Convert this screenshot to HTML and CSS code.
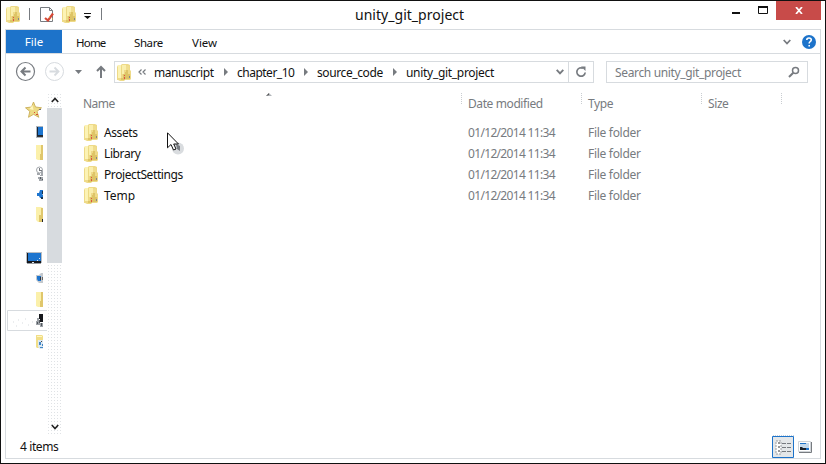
FILE: index.html
```html
<!DOCTYPE html>
<html lang="en">
<head>
<meta charset="utf-8">
<title>unity_git_project</title>
<link rel="stylesheet" href="styles.css">
</head>
<body>
<svg class="defs" width="0" height="0">
  <symbol id="folder" viewBox="0 0 14 17">
    <path d="M1 1h3l1-1h6l2 1v5l1 1v8l-1 1H8l-1 1H3l-2-1H0V3z" fill="#eeda88"/>
    <path d="M1 1h3v13H1z" fill="#fcf3b5"/>
    <path d="M5 1h4v5H7v4H5z" fill="#faefad"/>
    <path d="M9 2h3v4H9z" fill="#f0dd8e"/>
    <path d="M9 6h2v4h2v5H8v1H4v-2h2v-4h2V8h1z" fill="#dec466"/>
    <path d="M4 3h1v8H4z" fill="#ecd983"/>
    <path d="M7 11h1v1H7zM7 13h1v2H7z" fill="#df5146"/>
    <path d="M12 12h1v2h-1z" fill="#85878c"/>
  </symbol>
  <symbol id="crumb" viewBox="0 0 4 8"><path d="M0 0l4 4-4 4z" fill="#777b80"/></symbol>
  <symbol id="monitor" viewBox="0 0 16 13">
    <path d="M0 0h16v11H0z" fill="#b9bdc2"/><path d="M1 1h14v10H1z" fill="#15181d"/>
    <path d="M2 1h13v8H2z" fill="#1d75cf"/><path d="M1 11h14v1H1z" fill="#999da2"/>
    <path d="M11 8h1v1h-1zM13 6h1v1h-1zM6 10h2v1H6z" fill="#dce4ec"/>
  </symbol>
</svg>
<div class="window">
  <header class="titlebar">
    <div class="quick">
      <svg class="q-folder" width="14" height="17"><use href="#folder"/></svg>
      <i class="sep"></i>
      <svg class="q-doc" width="16" height="17" viewBox="0 0 16 17"><path d="M.5 1.500h9l3 3v11H.5z" fill="#fff" stroke="#777b80"/><path d="M9.500 1.500v3h3" fill="none" stroke="#777b80"/><path d="M5 12l3 2.500 5-7" fill="none" stroke="#d54836" stroke-width="2.200"/><path d="M9 11h1M12 13h1" stroke="#edb24a"/></svg>
      <svg class="q-folder2" width="14" height="17"><use href="#folder"/></svg>
      <svg class="q-menu" width="7" height="6" viewBox="0 0 7 6"><path d="M0 0h7v1H0zM0 3h7L3.500 6z" fill="#111"/></svg>
      <i class="sep"></i>
    </div>
    <h1 class="title">unity_git_project</h1>
    <div class="controls">
      <svg width="53" height="18" viewBox="0 0 53 18"><path d="M9 11h8v2H9z" fill="#111"/><path d="M35.500 6v6.500h9V6z" fill="none" stroke="#111"/><path d="M35 5h10v2H35z" fill="#111"/></svg>
      <span class="close"><svg width="8" height="7" viewBox="0 0 8 7"><path d="M1 0l6 7M7 0L1 7" stroke="#fff" stroke-width="1.700"/></svg></span>
    </div>
  </header>
  <div class="frame">
    <nav class="tabs">
      <span class="file">File</span><span class="tab home">Home</span><span class="tab share">Share</span><span class="tab view">View</span>
      <svg class="collapse" width="8" height="6" viewBox="0 0 8 6"><path d="M.7 1L4 4.500 7.300 1" fill="none" stroke="#777b80" stroke-width="1.800"/></svg>
      <svg class="help" width="14" height="14" viewBox="0 0 14 14"><circle cx="7" cy="7" r="7" fill="#1d73ca"/><path d="M4.800 5Q4.800 3 7 3t2.300 1.800Q9.300 6 7.900 6.900 7.200 7.300 7.200 8.600M7.200 10v1.600" fill="none" stroke="#fff" stroke-width="1.600"/></svg>
    </nav>
    <div class="navrow">
      <svg class="arrows" width="93" height="22" viewBox="0 0 93 22">
        <circle cx="10.500" cy="10.500" r="9" fill="none" stroke="#777b80" stroke-width="1.200"/><path d="M15.500 10.500h-9M10.500 6.500l-4 4 4 4" fill="none" stroke="#777b80" stroke-width="2"/>
        <circle cx="39.500" cy="10.500" r="9" fill="none" stroke="#d7dbdf"/><path d="M34.500 10.500h9M39.500 6.500l4 4-4 4" fill="none" stroke="#d7dbdf" stroke-width="1.800"/>
        <path d="M60 9h7l-3.500 4z" fill="#777b80"/><path d="M86 17V6M82 10l4-4 4 4" fill="none" stroke="#777b80" stroke-width="2"/>
      </svg>
      <div class="address">
        <svg class="a-folder" width="14" height="17"><use href="#folder"/></svg>
        <svg class="chevs" width="8" height="6" viewBox="0 0 8 6"><path d="M3.500.5L1 3l2.500 2.500M7.500.5L5 3l2.500 2.500" fill="none" stroke="#777b80" stroke-width="1.200"/></svg>
        <span class="part p1">manuscript</span><svg class="arrow" width="4" height="8"><use href="#crumb"/></svg>
        <span class="part p2">chapter_10</span><svg class="arrow" width="4" height="8"><use href="#crumb"/></svg>
        <span class="part p3">source_code</span><svg class="arrow" width="4" height="8"><use href="#crumb"/></svg>
        <span class="part p4">unity_git_project</span>
        <svg class="drop" width="8" height="6" viewBox="0 0 8 6"><path d="M.7.8L4 4.300 7.300.8" fill="none" stroke="#777b80" stroke-width="1.900"/></svg>
        <span class="refresh"><svg width="12" height="12" viewBox="0 0 12 12"><path d="M8 2.300A4.200 4.200 0 1 0 10.200 6.500" fill="none" stroke="#777b80" stroke-width="1.700"/><path d="M6 .5h4.500V5z" fill="#777b80"/></svg></span>
      </div>
      <div class="search"><span>Search unity_git_project</span><svg width="12" height="12" viewBox="0 0 12 12"><circle cx="7.500" cy="4.500" r="3" fill="none" stroke="#777b80" stroke-width="1.500"/><path d="M5.300 6.700L1 11" stroke="#777b80" stroke-width="2"/></svg></div>
    </div>
    <div class="body">
      <aside class="tree">
        <svg class="places" width="41" height="260" viewBox="0 0 41 260">
          <path d="M27.500 9l2 5 6 .8-4.500 3.500 1.800 6-5.300-3-5 3 1.300-6-4.300-3.500 6-.8z" fill="#eddb85" stroke="#c9ae58" stroke-width=".9"/><path d="M26.500 12l1 5-4-1z" fill="#fff6bf"/><path d="M28 19h1v1h-1zM30 21h2v1h-2z" fill="#d94b35"/><path d="M33 16h2v1h-2z" fill="#777"/>
          <path d="M30 33h7v12h-7z" fill="#aeb6bf"/><path d="M31 34h6v9h-6z" fill="#182636"/><path d="M32 34h5v8h-5z" fill="#1d75cf"/><path d="M31 43h6v1h-6z" fill="#333"/>
          <g id="clipfolder"><path d="M30 52h5l2 1v14h-5l-2-1z" fill="#fbf0aa"/><path d="M35 52h2v15h-3v-6h1z" fill="#e0c76c"/></g>
          <circle cx="33.500" cy="77" r="3" fill="#fff" stroke="#a3a7ac"/><path d="M33 75h1v2h2v1h-3z" fill="#777b80"/><path d="M31 80h3v2h-3zM35 78h2v5h-3v-1h1z" fill="#a3a7ac"/><path d="M32 84h5v4h-4v-2h-1z" fill="#a3a7ac"/><path d="M34 84h1v2h-1zM36 86h1v1h-1z" fill="#555b61"/>
          <path d="M34 97h3v3l-1 1 1 1v3h-3l-1-2h-2v-3h2z" fill="#1d75cf"/><path d="M36 98h1v3h-1zM35 104h2v2h-2z" fill="#17344f"/>
          <path d="M30 114h5l2 1v14h-5l-2-2z" fill="#fbf0aa"/><path d="M35 115h2v14h-4v-7h2z" fill="#e0c76c"/><path d="M36 126h1v3h-1z" fill="#25282d"/>
          <svg x="20" y="159" width="16" height="13"><use href="#monitor"/></svg>
          <path d="M30 182h3l2-2h2v10h-4l-3-3z" fill="#c4c9ce"/><path d="M31 183h4v5h-3l-1-2z" fill="#1d75cf"/><path d="M34 184h1v3h-1z" fill="#33383e"/><path d="M36 184h1v3h-1z" fill="#666"/>
          <use href="#clipfolder" y="147"/>
          <path d="M41 217.500H1.500v20H41" fill="none" stroke="#d7dbdf"/><path d="M7 229h1M12 227h1M10 233h1M16 230h1M19 226h1M22 232h1M26 229h1" stroke="#d7dbdf"/>
          <path d="M33 221h4v8h-3v-3h-1z" fill="#17191d"/><path d="M31 225h2v5h4v4h-3v-2h-4v-4h1z" fill="#9ca1a6"/><path d="M31 229h1v2h-1zM33 227h1v3h-1zM35 230h1v3h-1z" fill="#53585e"/>
          <path d="M30 242h6l1 1v12h-6l-1-1z" fill="#f1de87"/><path d="M31 243h5v1h-5z" fill="#fff6c1"/><path d="M32 247h5v9h-3l-2-2z" fill="#dce8f2"/><path d="M33 249h2v3h-2zM34 254h3v1h-3zM36 251h1v2h-1z" fill="#4387c5"/><path d="M35 248h1v1h-1z" fill="#444"/>
        </svg>
        <div class="scroll">
          <svg width="8" height="6" viewBox="0 0 8 6"><path d="M.8 5L4 1.500 7.200 5" fill="none" stroke="#222" stroke-width="1.600"/></svg>
          <i class="thumb"></i>
          <svg class="down" width="8" height="6" viewBox="0 0 8 6"><path d="M.8 1L4 4.500 7.200 1" fill="none" stroke="#222" stroke-width="1.600"/></svg>
        </div>
      </aside>
      <main class="list">
        <div class="row head"><span class="c-name">Name<svg class="sort" width="8" height="4" viewBox="0 0 8 4"><path d="M1 4l3-3 3 3z" fill="#b1b5ba"/><path d="M1 4l3-3v2z" fill="#555"/></svg></span><span class="c-date">Date modified</span><span class="c-type">Type</span><span class="c-size">Size</span></div>
        <div class="row"><span class="c-name"><svg width="14" height="17"><use href="#folder"/></svg><b class="assets">Assets</b></span><span class="c-date">01/12/2014 11:34</span><span class="c-type">File folder</span></div>
        <div class="row"><span class="c-name"><svg width="14" height="17"><use href="#folder"/></svg><b class="library">Library</b></span><span class="c-date">01/12/2014 11:34</span><span class="c-type">File folder</span></div>
        <div class="row"><span class="c-name"><svg width="14" height="17"><use href="#folder"/></svg><b class="settings">ProjectSettings</b></span><span class="c-date">01/12/2014 11:34</span><span class="c-type">File folder</span></div>
        <div class="row"><span class="c-name"><svg width="14" height="17"><use href="#folder"/></svg><b class="temp">Temp</b></span><span class="c-date">01/12/2014 11:34</span><span class="c-type">File folder</span></div>
      </main>
    </div>
    <footer class="status">
      <span>4 items</span>
      <svg width="42" height="24" viewBox="0 0 42 24"><path d="M.5 1.500h21v21H.5z" fill="#e4e7e9" stroke="#1d73ca"/><path d="M1 .5h21" stroke="#c7d2dd" stroke-dasharray="1 1"/><path d="M4 6h5v13H4z" fill="#fff" stroke="#999da2" stroke-dasharray="2 1"/><path d="M6 8h2M6 12h2M6 16h2" stroke="#333"/><path d="M10 8.500h4m1 0h4M10 12.500h4m1 0h4M10 16.500h4m1 0h4" stroke="#777b80"/><path d="M26.500 6.500h12v10h-12z" fill="#fff" stroke="#d0d4d8"/><path d="M39.500 7v10.500H27" fill="none" stroke="#777b80"/><path d="M28 8h9v7h-9z" fill="#c3d8eb"/><path d="M28 8h6v1h-6zM31 13h6v2h-6z" fill="#1d73ca"/><path d="M28 12h2l1 1h3v2h-6z" fill="#1b222b"/></svg>
    </footer>
  </div>
  <svg class="cursor" width="18" height="24" viewBox="0 0 18 24"><circle cx="11" cy="16.500" r="6" fill="#d9dcdf"/><path d="M9 12l4 2v5l-3-2z" fill="#777b80"/><path d="M.5.8v15l3.500-3.300L6.500 18l2.500-1-2.300-5h4.800z" fill="#fff" stroke="#111"/></svg>
</div>
</body>
</html>
```
FILE: styles.css
```css
* { box-sizing: border-box; }
body { margin: 0; background: #fff; color: #111; font: 12px/16px "Noto Sans", "Open Sans", sans-serif; }
svg { display: block; flex: none; }
i, b { font: inherit; }
span, b { white-space: nowrap; }
.defs { position: absolute; }
.window { position: relative; width: 826px; height: 464px; border: 1px solid #111; display: flex; flex-direction: column; padding: 0 4px 4px; }
.titlebar { height: 28px; display: grid; grid-template-columns: 300px 1fr 105px; flex: none; }
.quick { display: flex; align-items: flex-start; padding: 5px 0 0 1px; }
.sep { width: 1px; height: 12px; margin-top: 2px; background: #777b80; }
.q-folder { margin-right: 9px; }
.q-doc { margin-left: 10px; }
.q-folder2 { margin-left: 6px; }
.q-menu { margin: 7px 10px 0 8px; }
.title { margin: 0; padding: 4px 0 0 50px; font-size: 14px; font-weight: 400; line-height: 20px; letter-spacing: .03px; white-space: nowrap; }
.controls { display: flex; justify-content: flex-end; }
.close { width: 45px; height: 19px; background: #c84b49; display: flex; align-items: center; justify-content: center; }
.frame { flex: 1; border: 1px solid #d7dbdf; display: flex; flex-direction: column; }
.tabs { height: 24px; flex: none; border-bottom: 1px solid #d7dbdf; display: flex; align-items: center; font-size: 11.500px; letter-spacing: -.4px; }
.file { width: 56px; height: 23px; line-height: 24px; text-align: center; background: #1d73ca; color: #fff; letter-spacing: 0; }
.tab { padding-top: 3px; }
.home { width: 58px; margin-left: 14px; letter-spacing: -.8px; }
.share { width: 58px; }
.view { letter-spacing: 0; }
.collapse { margin-left: auto; }
.help { margin: 0 4px 0 11px; }
.navrow { height: 39px; flex: none; display: flex; align-items: flex-start; padding: 7px 0 0 9px; }
.arrows { margin-right: 6px; }
.address { width: 480px; height: 22px; border: 1px solid #d7dbdf; display: flex; align-items: center; padding-left: 2px; }
.chevs { margin: 0 8px 0 7px; }
.part { letter-spacing: -.3px; padding-top: 1px; }
.p1 { width: 70px; letter-spacing: -.45px; }
.arrow + .part { margin-left: 9px; }
.p2 { width: 67px; letter-spacing: -.5px; }
.p3 { width: 76px; letter-spacing: -.4px; }
.drop { margin-left: auto; }
.refresh { width: 25px; height: 20px; margin-left: 4px; border-left: 1px solid #d7dbdf; display: flex; align-items: center; justify-content: center; }
.search { width: 202px; height: 22px; margin-left: 12px; padding: 0 7px 0 8px; border: 1px solid #d7dbdf; color: #777b80; display: flex; align-items: center; justify-content: space-between; letter-spacing: -.35px; }
.search span { padding-top: 1px; }
.body { flex: 1; display: flex; }
.tree { width: 57px; display: flex; }
.scroll { width: 16px; height: 341px; display: flex; flex-direction: column; align-items: center; padding: 4px 0; background: radial-gradient(circle, #dfe2e5 .6px, transparent .8px) 0 0 / 3px 3px; }
.thumb { width: 15px; height: 155px; margin: 5px 1px 0 0; background: #d7dbdf; }
.down { margin-top: auto; }
.list { flex: 1; padding-left: 20px; color: #777b80; }
.row { display: grid; grid-template-columns: 379px 120px 120px 80px; height: 21px; align-items: center; letter-spacing: -.3px; }
.head { height: 19px; margin-bottom: 10px; letter-spacing: -.4px; }
.head span { position: relative; height: 19px; line-height: 22px; }
.head span::after { content: ""; position: absolute; right: 0; top: 0; height: 11px; border-right: 1px dotted #c9cdd1; }
.sort { position: absolute; left: 182px; top: -1px; }
.c-name { display: flex; align-items: center; padding-left: 1px; }
.head .c-name { display: block; padding-left: 0; letter-spacing: -.5px; }
.c-date, .c-type, .c-size { padding-left: 6px; }
.row:not(.head) .c-date { letter-spacing: -.67px; padding-top: 1px; }
.row:not(.head) .c-type { padding-top: 1px; letter-spacing: -.3px; }
b { color: #111; margin-left: 6px; padding-top: 1px; }
.assets { letter-spacing: -.4px; }
.settings { letter-spacing: -.4px; }
.library { letter-spacing: -.4px; }
.temp { letter-spacing: 0; }
.status { height: 23px; flex: none; display: flex; justify-content: space-between; padding: 0 6px 0 14px; line-height: 24px; letter-spacing: -.4px; }
.cursor { position: absolute; left: 166px; top: 131px; }
```
